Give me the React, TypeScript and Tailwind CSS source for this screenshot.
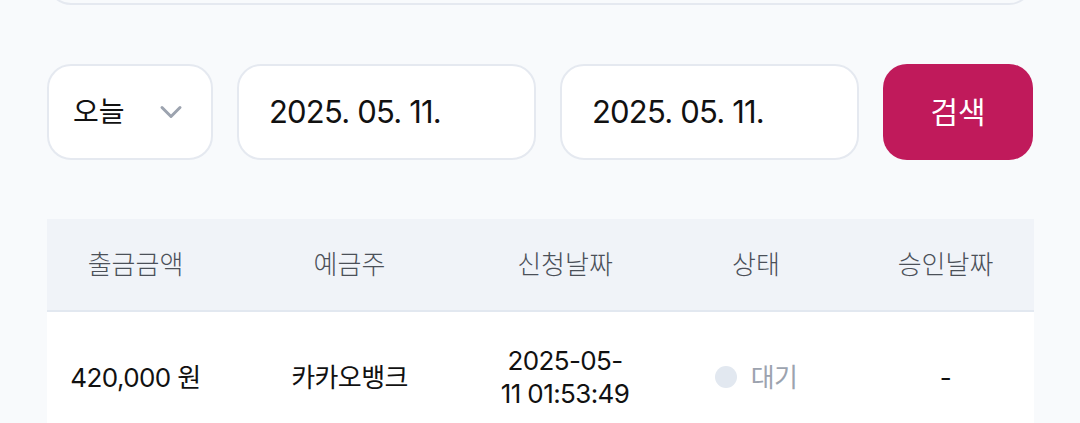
import { ChevronDown } from 'lucide-react';

const font = { fontFamily: 'Inter, "Noto Sans CJK KR", sans-serif' };

// 출금 내역 조회 - 기간 필터와 결과 테이블
export default function App() {
  return (
    <div
      className="min-h-[423px] overflow-hidden bg-[#f8fafc] px-[47px] text-[#111]"
      style={font}
    >
      <div className="-mt-[55px] h-[60px] rounded-[24px] border-2 border-[#e5e9f0] bg-[#f8fafc]" />

      <div className="mt-[59px] flex h-[96px] gap-[24px]">
        <div className="flex w-[166px] items-center justify-between rounded-[24px] border-2 border-[#e5e9f0] bg-white pl-[24px] pr-[22px]">
          <span className="text-[28px]">오늘</span>
          <ChevronDown className="h-[36px] w-[36px] text-[#9ca3af]" strokeWidth={2} />
        </div>
        <div className="flex w-[299px] items-center rounded-[24px] border-2 border-[#e5e9f0] bg-white pl-[30px] text-[31px] tracking-[-0.8px]">
          2025. 05. 11.
        </div>
        <div className="flex w-[299px] items-center rounded-[24px] border-2 border-[#e5e9f0] bg-white pl-[30px] text-[31px] tracking-[-0.8px]">
          2025. 05. 11.
        </div>
        <button className="flex w-[150px] items-center justify-center rounded-[24px] bg-[#c01a5b] text-[30px] text-white">
          검색
        </button>
      </div>

      <div className="mt-[59px] w-[987px]">
        <div className="grid h-[93px] grid-cols-[177px_251px_180px_202px_177px] items-center border-b-2 border-[#e2e8f0] bg-[#f0f3f8] text-center text-[26px] font-light text-[#4b5058]">
          <span>출금금액</span>
          <span>예금주</span>
          <span>신청날짜</span>
          <span>상태</span>
          <span>승인날짜</span>
        </div>
        <div className="grid h-[130px] grid-cols-[177px_251px_180px_202px_177px] items-center bg-white text-center text-[26px] tracking-[-0.6px]">
          <span>420,000 원</span>
          <span>카카오뱅크</span>
          <span className="leading-[33px]">
            <span className="block">2025-05-</span>
            <span className="block">11 01:53:49</span>
          </span>
          <span className="flex items-center justify-center gap-[14px] text-[#9ca3af]">
            <span className="h-[22px] w-[22px] rounded-full bg-[#e2e8f0]" />
            대기
          </span>
          <span>-</span>
        </div>
      </div>
    </div>
  );
}
